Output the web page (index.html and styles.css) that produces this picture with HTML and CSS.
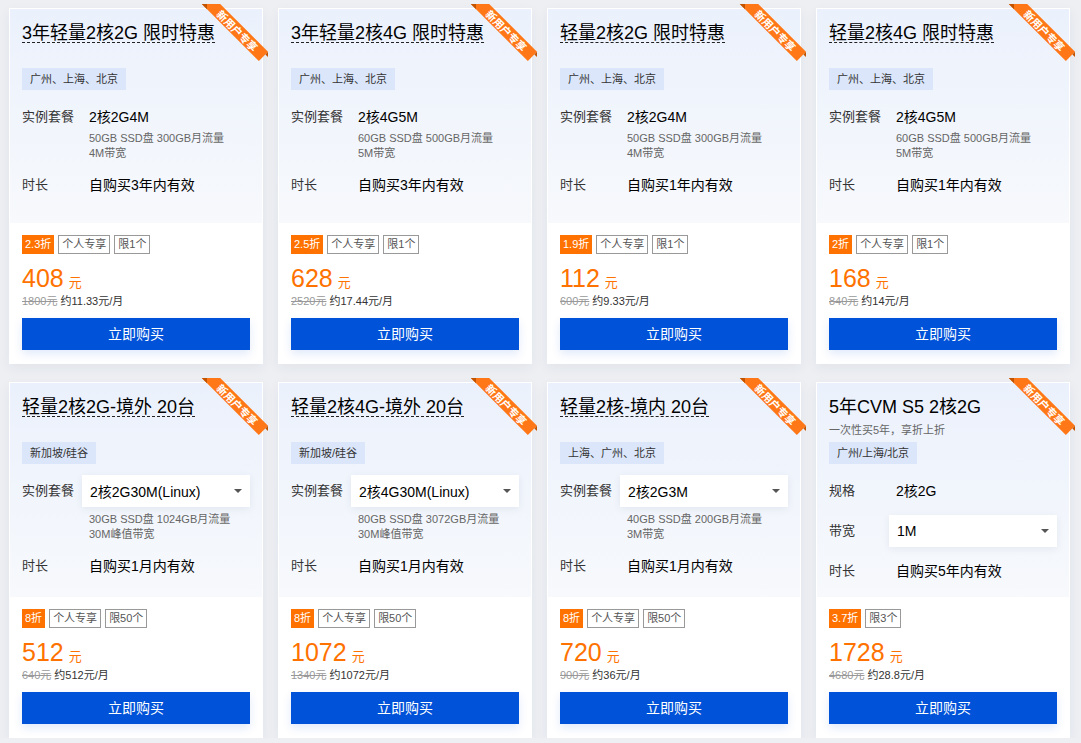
FILE: index.html
```html
<!DOCTYPE html>
<html>
<head>
	<meta charset="utf-8"/>
	<title>新用户专享</title>
	<link rel="stylesheet" href="styles.css">
</head>
<body>
<div class="goods">

	<!-- row 1 -->
	<div class="card">
		<svg class="ribbon" width="70" height="70" viewBox="0 0 70 70"><polygon class="rb-band" points="2.8,1 21.2,1 69,48.8 59.8,58"/><polygon class="rb-fold" points="2.8,1 8,1 8,6.2"/><polygon class="rb-fold" points="69,48.8 69,54 66.4,51.4"/><text x="38.5" y="27.5" transform="rotate(45 38.5 27.5)">新用户专享</text></svg>
		<div class="card-top">
			<div class="head"><span class="title dashed">3年轻量2核2G 限时特惠</span></div>
			<div class="areas"><span class="area">广州、上海、北京</span></div>
			<div class="spec">
				<span class="spec-label">实例套餐</span>
				<div class="spec-val">
					<div class="val-text">2核2G4M</div>
					<div class="sub">50GB SSD盘 300GB月流量<br>4M带宽</div>
				</div>
			</div>
			<div class="spec">
				<span class="spec-label">时长</span>
				<div class="spec-val"><div class="val-text">自购买3年内有效</div></div>
			</div>
		</div>
		<div class="card-bottom">
			<div class="badges"><span class="badge-off">2.3折</span><span class="badge-line">个人专享</span><span class="badge-line">限1个</span></div>
			<div class="price"><span class="num">408</span><span class="unit">元</span></div>
			<div class="old"><span class="del">1800元</span><span class="avg">约11.33元/月</span></div>
			<div class="buy">立即购买</div>
		</div>
	</div>

	<div class="card">
		<svg class="ribbon" width="70" height="70" viewBox="0 0 70 70"><polygon class="rb-band" points="2.8,1 21.2,1 69,48.8 59.8,58"/><polygon class="rb-fold" points="2.8,1 8,1 8,6.2"/><polygon class="rb-fold" points="69,48.8 69,54 66.4,51.4"/><text x="38.5" y="27.5" transform="rotate(45 38.5 27.5)">新用户专享</text></svg>
		<div class="card-top">
			<div class="head"><span class="title dashed">3年轻量2核4G 限时特惠</span></div>
			<div class="areas"><span class="area">广州、上海、北京</span></div>
			<div class="spec">
				<span class="spec-label">实例套餐</span>
				<div class="spec-val">
					<div class="val-text">2核4G5M</div>
					<div class="sub">60GB SSD盘 500GB月流量<br>5M带宽</div>
				</div>
			</div>
			<div class="spec">
				<span class="spec-label">时长</span>
				<div class="spec-val"><div class="val-text">自购买3年内有效</div></div>
			</div>
		</div>
		<div class="card-bottom">
			<div class="badges"><span class="badge-off">2.5折</span><span class="badge-line">个人专享</span><span class="badge-line">限1个</span></div>
			<div class="price"><span class="num">628</span><span class="unit">元</span></div>
			<div class="old"><span class="del">2520元</span><span class="avg">约17.44元/月</span></div>
			<div class="buy">立即购买</div>
		</div>
	</div>

	<div class="card">
		<svg class="ribbon" width="70" height="70" viewBox="0 0 70 70"><polygon class="rb-band" points="2.8,1 21.2,1 69,48.8 59.8,58"/><polygon class="rb-fold" points="2.8,1 8,1 8,6.2"/><polygon class="rb-fold" points="69,48.8 69,54 66.4,51.4"/><text x="38.5" y="27.5" transform="rotate(45 38.5 27.5)">新用户专享</text></svg>
		<div class="card-top">
			<div class="head"><span class="title dashed">轻量2核2G 限时特惠</span></div>
			<div class="areas"><span class="area">广州、上海、北京</span></div>
			<div class="spec">
				<span class="spec-label">实例套餐</span>
				<div class="spec-val">
					<div class="val-text">2核2G4M</div>
					<div class="sub">50GB SSD盘 300GB月流量<br>4M带宽</div>
				</div>
			</div>
			<div class="spec">
				<span class="spec-label">时长</span>
				<div class="spec-val"><div class="val-text">自购买1年内有效</div></div>
			</div>
		</div>
		<div class="card-bottom">
			<div class="badges"><span class="badge-off">1.9折</span><span class="badge-line">个人专享</span><span class="badge-line">限1个</span></div>
			<div class="price"><span class="num">112</span><span class="unit">元</span></div>
			<div class="old"><span class="del">600元</span><span class="avg">约9.33元/月</span></div>
			<div class="buy">立即购买</div>
		</div>
	</div>

	<div class="card">
		<svg class="ribbon" width="70" height="70" viewBox="0 0 70 70"><polygon class="rb-band" points="2.8,1 21.2,1 69,48.8 59.8,58"/><polygon class="rb-fold" points="2.8,1 8,1 8,6.2"/><polygon class="rb-fold" points="69,48.8 69,54 66.4,51.4"/><text x="38.5" y="27.5" transform="rotate(45 38.5 27.5)">新用户专享</text></svg>
		<div class="card-top">
			<div class="head"><span class="title dashed">轻量2核4G 限时特惠</span></div>
			<div class="areas"><span class="area">广州、上海、北京</span></div>
			<div class="spec">
				<span class="spec-label">实例套餐</span>
				<div class="spec-val">
					<div class="val-text">2核4G5M</div>
					<div class="sub">60GB SSD盘 500GB月流量<br>5M带宽</div>
				</div>
			</div>
			<div class="spec">
				<span class="spec-label">时长</span>
				<div class="spec-val"><div class="val-text">自购买1年内有效</div></div>
			</div>
		</div>
		<div class="card-bottom">
			<div class="badges"><span class="badge-off">2折</span><span class="badge-line">个人专享</span><span class="badge-line">限1个</span></div>
			<div class="price"><span class="num">168</span><span class="unit">元</span></div>
			<div class="old"><span class="del">840元</span><span class="avg">约14元/月</span></div>
			<div class="buy">立即购买</div>
		</div>
	</div>

	<!-- row 2 -->
	<div class="card">
		<svg class="ribbon" width="70" height="70" viewBox="0 0 70 70"><polygon class="rb-band" points="2.8,1 21.2,1 69,48.8 59.8,58"/><polygon class="rb-fold" points="2.8,1 8,1 8,6.2"/><polygon class="rb-fold" points="69,48.8 69,54 66.4,51.4"/><text x="38.5" y="27.5" transform="rotate(45 38.5 27.5)">新用户专享</text></svg>
		<div class="card-top">
			<div class="head"><span class="title dashed">轻量2核2G-境外 20台</span></div>
			<div class="areas"><span class="area">新加坡/硅谷</span></div>
			<div class="spec">
				<span class="spec-label">实例套餐</span>
				<div class="spec-val">
					<div class="select">2核2G30M(Linux)<i class="caret"></i></div>
					<div class="sub">30GB SSD盘 1024GB月流量<br>30M峰值带宽</div>
				</div>
			</div>
			<div class="spec">
				<span class="spec-label">时长</span>
				<div class="spec-val"><div class="val-text">自购买1月内有效</div></div>
			</div>
		</div>
		<div class="card-bottom">
			<div class="badges"><span class="badge-off">8折</span><span class="badge-line">个人专享</span><span class="badge-line">限50个</span></div>
			<div class="price"><span class="num">512</span><span class="unit">元</span></div>
			<div class="old"><span class="del">640元</span><span class="avg">约512元/月</span></div>
			<div class="buy">立即购买</div>
		</div>
	</div>

	<div class="card">
		<svg class="ribbon" width="70" height="70" viewBox="0 0 70 70"><polygon class="rb-band" points="2.8,1 21.2,1 69,48.8 59.8,58"/><polygon class="rb-fold" points="2.8,1 8,1 8,6.2"/><polygon class="rb-fold" points="69,48.8 69,54 66.4,51.4"/><text x="38.5" y="27.5" transform="rotate(45 38.5 27.5)">新用户专享</text></svg>
		<div class="card-top">
			<div class="head"><span class="title dashed">轻量2核4G-境外 20台</span></div>
			<div class="areas"><span class="area">新加坡/硅谷</span></div>
			<div class="spec">
				<span class="spec-label">实例套餐</span>
				<div class="spec-val">
					<div class="select">2核4G30M(Linux)<i class="caret"></i></div>
					<div class="sub">80GB SSD盘 3072GB月流量<br>30M峰值带宽</div>
				</div>
			</div>
			<div class="spec">
				<span class="spec-label">时长</span>
				<div class="spec-val"><div class="val-text">自购买1月内有效</div></div>
			</div>
		</div>
		<div class="card-bottom">
			<div class="badges"><span class="badge-off">8折</span><span class="badge-line">个人专享</span><span class="badge-line">限50个</span></div>
			<div class="price"><span class="num">1072</span><span class="unit">元</span></div>
			<div class="old"><span class="del">1340元</span><span class="avg">约1072元/月</span></div>
			<div class="buy">立即购买</div>
		</div>
	</div>

	<div class="card">
		<svg class="ribbon" width="70" height="70" viewBox="0 0 70 70"><polygon class="rb-band" points="2.8,1 21.2,1 69,48.8 59.8,58"/><polygon class="rb-fold" points="2.8,1 8,1 8,6.2"/><polygon class="rb-fold" points="69,48.8 69,54 66.4,51.4"/><text x="38.5" y="27.5" transform="rotate(45 38.5 27.5)">新用户专享</text></svg>
		<div class="card-top">
			<div class="head"><span class="title dashed">轻量2核-境内 20台</span></div>
			<div class="areas"><span class="area">上海、广州、北京</span></div>
			<div class="spec">
				<span class="spec-label">实例套餐</span>
				<div class="spec-val">
					<div class="select">2核2G3M<i class="caret"></i></div>
					<div class="sub">40GB SSD盘 200GB月流量<br>3M带宽</div>
				</div>
			</div>
			<div class="spec">
				<span class="spec-label">时长</span>
				<div class="spec-val"><div class="val-text">自购买1月内有效</div></div>
			</div>
		</div>
		<div class="card-bottom">
			<div class="badges"><span class="badge-off">8折</span><span class="badge-line">个人专享</span><span class="badge-line">限50个</span></div>
			<div class="price"><span class="num">720</span><span class="unit">元</span></div>
			<div class="old"><span class="del">900元</span><span class="avg">约36元/月</span></div>
			<div class="buy">立即购买</div>
		</div>
	</div>

	<div class="card">
		<svg class="ribbon" width="70" height="70" viewBox="0 0 70 70"><polygon class="rb-band" points="2.8,1 21.2,1 69,48.8 59.8,58"/><polygon class="rb-fold" points="2.8,1 8,1 8,6.2"/><polygon class="rb-fold" points="69,48.8 69,54 66.4,51.4"/><text x="38.5" y="27.5" transform="rotate(45 38.5 27.5)">新用户专享</text></svg>
		<div class="card-top">
			<div class="head">
				<span class="title">5年CVM S5 2核2G</span>
				<div class="desc">一次性买5年，享折上折</div>
			</div>
			<div class="areas"><span class="area">广州/上海/北京</span></div>
			<div class="spec">
				<span class="spec-label">规格</span>
				<div class="spec-val"><div class="val-text">2核2G</div></div>
			</div>
			<div class="spec">
				<span class="spec-label">带宽</span>
				<div class="spec-val"><div class="select">1M<i class="caret"></i></div></div>
			</div>
			<div class="spec">
				<span class="spec-label">时长</span>
				<div class="spec-val"><div class="val-text">自购买5年内有效</div></div>
			</div>
		</div>
		<div class="card-bottom">
			<div class="badges"><span class="badge-off">3.7折</span><span class="badge-line">限3个</span></div>
			<div class="price"><span class="num">1728</span><span class="unit">元</span></div>
			<div class="old"><span class="del">4680元</span><span class="avg">约28.8元/月</span></div>
			<div class="buy">立即购买</div>
		</div>
	</div>

</div>
</body>
</html>
```

FILE: styles.css
```css
	body{
		margin: 0;
		background: #edeff3;
		font-family: "Liberation Sans", "Noto Sans CJK SC", sans-serif;
		color: #000;
	}

	.goods{
		display: grid;
		grid-template-columns: repeat(4, 254px);
		column-gap: 15px;
		row-gap: 18px;
		padding: 8px 0 0 9px;
	}

	.card{
		position: relative;
		height: 356px;
		background: #fff;
		box-shadow: 0 4px 12px rgba(30, 50, 90, 0.06);
	}

	/* corner ribbon */
	.ribbon{
		position: absolute;
		top: -5px;
		right: -6px;
		z-index: 1;
		overflow: visible;
	}
	.rb-band{
		fill: #ff7716;
	}
	.rb-fold{
		fill: #c25400;
	}
	.ribbon text{
		fill: #fff;
		font-family: "Noto Sans CJK SC", sans-serif;
		font-size: 10.5px;
		font-weight: bold;
		text-anchor: middle;
		dominant-baseline: central;
	}

	.card-top{
		box-sizing: border-box;
		display: flex;
		flex-direction: column;
		align-items: stretch;
		height: 215px;
		padding: 15px 12px 0;
		border: 1px solid #fff;
		border-bottom: 0;
		background: linear-gradient(180deg, #ebf1fc 0%, #f7f9fc 100%);
	}
	.head{
		height: 44px;
		flex: none;
	}
	.title{
		display: inline-block;
		font-size: 18px;
		line-height: 18px;
		color: #000;
	}
	.dashed{
		border-bottom: 1px dashed #222;
	}
	.desc{
		margin-top: 5px;
		font-size: 11px;
		line-height: 16px;
		color: #666;
	}

	.areas{
		height: 22px;
		flex: none;
		margin-bottom: 3px;
	}
	.area{
		display: inline-block;
		vertical-align: top;
		height: 22px;
		line-height: 22px;
		padding: 0 8px;
		font-size: 11px;
		color: #333;
		background: #dbe6fb;
	}

	.spec{
		display: flex;
		flex: none;
		margin-top: 8px;
	}
	.spec-label{
		width: 60px;
		flex: none;
		font-size: 13px;
		line-height: 32px;
		color: #333;
	}
	.spec-val{
		flex: 1;
		min-width: 0;
	}
	.val-text{
		padding-left: 7px;
		font-size: 14px;
		line-height: 32px;
		color: #000;
	}
	.sub{
		margin-top: -2px;
		padding-left: 7px;
		font-size: 11px;
		line-height: 15px;
		color: #666;
	}
	.select{
		display: flex;
		align-items: center;
		justify-content: space-between;
		height: 32px;
		padding: 0 8px;
		background: #fff;
		font-size: 14px;
		color: #000;
		box-shadow: 0 2px 8px rgba(20, 40, 80, 0.07);
	}
	.select + .sub{
		margin-top: 5px;
	}
	.caret{
		width: 0;
		height: 0;
		border-left: 4px solid transparent;
		border-right: 4px solid transparent;
		border-top: 4px solid #555;
	}

	.card-bottom{
		box-sizing: border-box;
		height: 141px;
		padding: 12px 13px 14px;
		background: #fff;
	}
	.badges{
		display: flex;
		gap: 4px;
		height: 19px;
	}
	.badge-off{
		padding: 0 3px;
		font-size: 11px;
		line-height: 19px;
		color: #fff;
		background: #ff7200;
	}
	.badge-line{
		padding: 0 3px;
		font-size: 11px;
		line-height: 17px;
		color: #555;
		border: 1px solid #999;
	}
	.price{
		margin-top: 9px;
		height: 30px;
		line-height: 30px;
		color: #ff7200;
	}
	.price .num{
		font-size: 25px;
	}
	.price .unit{
		margin-left: 5px;
		font-size: 13px;
	}
	.old{
		height: 17px;
		line-height: 17px;
		font-size: 11px;
	}
	.old .del{
		color: #999;
		text-decoration: line-through;
	}
	.old .avg{
		margin-left: 3px;
		color: #333;
	}
	.buy{
		margin-top: 8px;
		height: 32px;
		line-height: 32px;
		text-align: center;
		font-size: 14px;
		color: #fff;
		background: #0052d9;
		box-shadow: 0 4px 10px rgba(0, 82, 217, 0.12);
		cursor: pointer;
	}
```
